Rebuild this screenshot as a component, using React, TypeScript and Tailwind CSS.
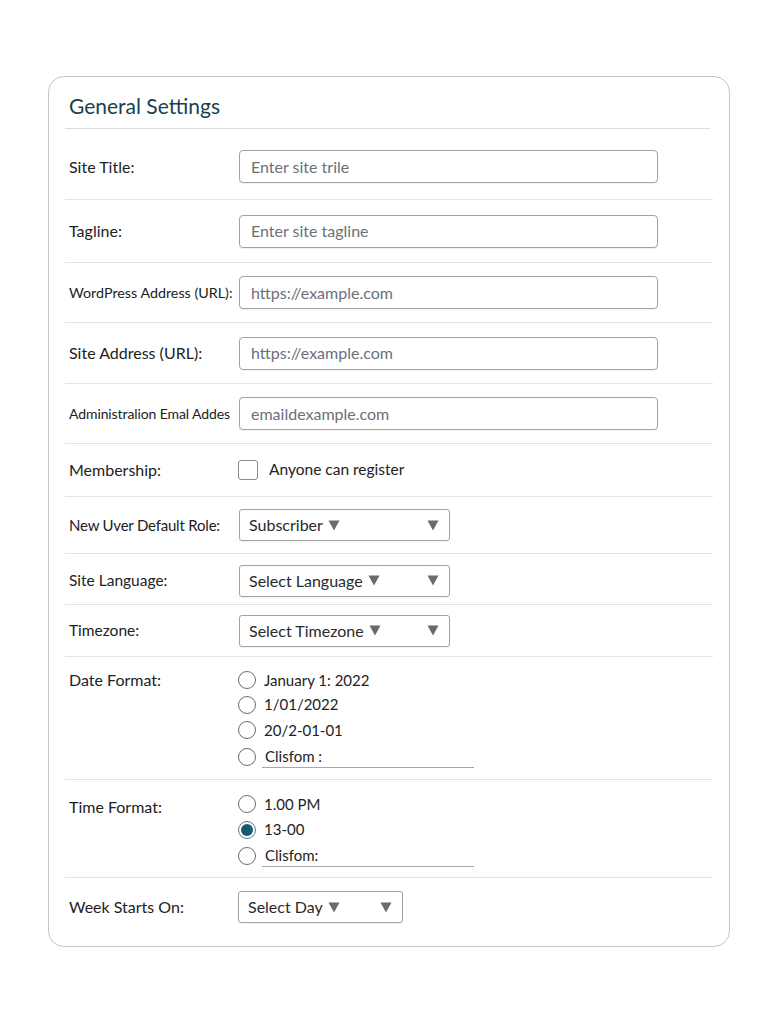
import React from "react";

const font = { fontFamily: 'Lato, "Open Sans", sans-serif' };

function Tri() {
  return (
    <svg width="12" height="11" viewBox="0 0 12 11" className="shrink-0">
      <path d="M0.5 0.5 H11.5 L6 10.5 Z" fill="#6b6b6b" />
    </svg>
  );
}

function TextInput({ placeholder }: { placeholder: string }) {
  return (
    <div className="flex h-[33px] w-[419px] items-center rounded-[4px] border border-[#a3a3a3] bg-white pl-[11px] text-[16px] text-[#6b7079] shadow-[0_1px_1px_rgba(0,0,0,0.06)]">
      {placeholder}
    </div>
  );
}

function Select({ label, width }: { label: string; width: string }) {
  return (
    <div
      className={`flex h-[32px] items-center justify-between rounded-[3px] border border-[#a3a3a3] bg-white pl-[9px] pr-[10px] text-[16px] text-[#2a2a2a] shadow-[0_1px_1px_rgba(0,0,0,0.06)] ${width}`}
    >
      <span className="flex items-center gap-[5px]">
        {label}
        <Tri />
      </span>
      <Tri />
    </div>
  );
}

function Radio({ checked }: { checked?: boolean }) {
  return checked ? (
    <span className="flex h-[18px] w-[18px] shrink-0 items-center justify-center rounded-full border-[1.5px] border-[#5a7d8c] bg-white">
      <span className="h-[12px] w-[12px] rounded-full bg-[#145b73]" />
    </span>
  ) : (
    <span className="h-[18px] w-[18px] shrink-0 rounded-full border-[1.5px] border-[#6a6a6a] bg-white" />
  );
}

function RadioLine({
  label,
  checked,
  underline,
  h,
}: {
  label: string;
  checked?: boolean;
  underline?: boolean;
  h: string;
}) {
  return (
    <div className={`flex items-center ${h}`}>
      <Radio checked={checked} />
      {underline ? (
        <span className="ml-[6px] flex h-[22px] w-[212px] items-center border-b border-[#a8a8a8] pl-[3px] text-[15px] text-[#222]">
          {label}
        </span>
      ) : (
        <span className="ml-[8px] text-[15px] text-[#222]">{label}</span>
      )}
    </div>
  );
}

function Row({
  label,
  labelClass,
  children,
  className,
}: {
  label: string;
  labelClass?: string;
  children: React.ReactNode;
  className: string;
}) {
  return (
    <div className={`flex items-center border-b border-[#e3e3e3] ${className}`}>
      <div className={`w-[174px] shrink-0 pl-[4px] text-[#222] ${labelClass ?? "text-[16px]"}`}>
        {label}
      </div>
      {children}
    </div>
  );
}

export default function App() {
  return (
    <div className="min-h-[1024px] bg-white pt-[76px]" style={font}>
      <div className="ml-[48px] h-[871px] w-[682px] rounded-[16px] border-[1.5px] border-[#c6c6c6] bg-white px-[16px] pt-[14px]">
        <div className="mr-[3px] h-[38px] border-b-[1.5px] border-[#dcdcdc] pl-[4px] text-[21px] leading-[30px] text-[#183f4f]">
          General Settings
        </div>

        <Row label="Site Title:" className="h-[71px] pt-[5px]">
          <TextInput placeholder="Enter site trile" />
        </Row>
        <Row label="Tagline:" className="h-[63px]">
          <TextInput placeholder="Enter site tagline" />
        </Row>
        <Row label="WordPress Address (URL):" labelClass="text-[14.3px]" className="h-[60px]">
          <TextInput placeholder="https://example.com" />
        </Row>
        <Row label="Site Address (URL):" className="h-[61px]">
          <TextInput placeholder="https://example.com" />
        </Row>
        <Row label="Administralion Emal Addes" labelClass="text-[14px] tracking-[-0.1px]" className="h-[60px]">
          <TextInput placeholder="emaildexample.com" />
        </Row>
        <Row label="Membership:" className="h-[53px]">
          <div className="flex items-center">
            <span className="-ml-[1px] h-[20px] w-[20px] rounded-[3px] border-[1.5px] border-[#8a8a8a] bg-white" />
            <span className="ml-[11px] text-[15.5px] text-[#222]">Anyone can register</span>
          </div>
        </Row>
        <Row label="New Uver Default Role:" labelClass="text-[15px] tracking-[-0.2px]" className="h-[57px]">
          <Select label="Subscriber" width="w-[211px]" />
        </Row>
        <Row label="Site Language:" labelClass="text-[15.5px]" className="h-[51px] pt-[3px]">
          <Select label="Select Language" width="w-[211px]" />
        </Row>
        <Row label="Timezone:" labelClass="text-[15.5px]" className="h-[52px]">
          <Select label="Select Timezone" width="w-[211px]" />
        </Row>

        <div className="flex h-[123px] items-start border-b border-[#e3e3e3] pt-[11px]">
          <div className="w-[173px] shrink-0 pl-[4px] pt-[1px] text-[16px] leading-[22px] text-[#222]">
            Date Format:
          </div>
          <div className="flex flex-col">
            <RadioLine label="January 1: 2022" h="h-[24px]" />
            <RadioLine label="1/01/2022" h="h-[25px]" />
            <RadioLine label="20/2-01-01" h="h-[26px]" />
            <RadioLine label="Clisfom :" underline h="h-[27px]" />
          </div>
        </div>

        <div className="flex h-[98px] items-start border-b border-[#e3e3e3] pt-[12px]">
          <div className="w-[173px] shrink-0 pl-[4px] pt-[4px] text-[16px] leading-[22px] text-[#222]">
            Time Format:
          </div>
          <div className="flex flex-col">
            <RadioLine label="1.00 PM" h="h-[24px]" />
            <RadioLine label="13-00" checked h="h-[27px]" />
            <RadioLine label="Clisfom:" underline h="h-[26px]" />
          </div>
        </div>

        <div className="flex h-[60px] items-center pb-[2px]">
          <div className="w-[173px] shrink-0 pl-[4px] text-[16px] text-[#222]">Week Starts On:</div>
          <Select label="Select Day" width="w-[165px]" />
        </div>
      </div>
    </div>
  );
}
